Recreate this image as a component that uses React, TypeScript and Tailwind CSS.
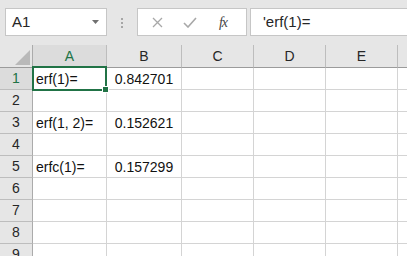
import React from "react";

const font = { fontFamily: '"Liberation Sans", Arial, sans-serif' };

const data: Record<number, [string, string]> = {
  1: ["erf(1)=", "0.842701"],
  3: ["erf(1, 2)=", "0.152621"],
  5: ["erfc(1)=", "0.157299"],
};

const colLetters = ["A", "B", "C", "D", "E", ""];

export default function App() {
  const rows = [1, 2, 3, 4, 5, 6, 7, 8, 9];
  return (
    <div className="w-[407px] h-[256px] overflow-hidden bg-[#e6e6e6] text-[#222]" style={font}>
      {/* Toolbar */}
      <div className="h-[45px] flex items-start pt-[8px]">
        <div className="ml-[5px] w-[102px] h-[28px] bg-white border border-[#c6c6c6] flex items-center pl-[6px] pr-[7px]">
          <span className="text-[15px] text-[#262626] flex-1 pt-[1px]">A1</span>
          <svg width="7" height="4" viewBox="0 0 7 4">
            <polygon points="0,0 7,0 3.5,4" fill="#707070" />
          </svg>
        </div>
        <div className="w-[30px] h-[28px] flex flex-col items-center justify-center gap-[2px] pt-[1px]">
          <div className="w-[2px] h-[2px] bg-[#a6a6a6]" />
          <div className="w-[2px] h-[2px] bg-[#a6a6a6]" />
          <div className="w-[2px] h-[2px] bg-[#a6a6a6]" />
        </div>
        <div className="w-[110px] h-[28px] bg-white border border-[#c6c6c6] flex items-center">
          <div className="w-[38px] flex justify-center pl-[1px]">
            <svg width="11" height="11" viewBox="0 0 11 11">
              <path d="M1 1 L10 10 M10 1 L1 10" stroke="#a8a8a8" strokeWidth="1.3" fill="none" />
            </svg>
          </div>
          <div className="w-[28px] flex justify-center">
            <svg width="14" height="11" viewBox="0 0 14 11">
              <path d="M1 6 L5 10 L13 1" stroke="#a8a8a8" strokeWidth="1.6" fill="none" />
            </svg>
          </div>
          <div className="flex-1 flex justify-center pr-[4px]">
            <span
              className="italic text-[14px] text-[#444] tracking-[-1px]"
              style={{ fontFamily: '"Liberation Serif", "Times New Roman", serif' }}
            >
              fx
            </span>
          </div>
        </div>
        <div className="ml-[3px] flex-1 -mr-[4px] h-[28px] bg-white border border-[#c6c6c6] flex items-center pl-[12px]">
          <span className="text-[15px] text-[#262626] pt-[1px]">'erf(1)=</span>
        </div>
      </div>

      {/* Grid */}
      <div className="grid grid-cols-[33px_74px_75px_72px_72px_72px_1fr] grid-rows-[23px] auto-rows-[22px] bg-white">
        {/* Header row */}
        <div className="relative bg-[#e6e6e6] border-r border-b border-r-[#ababab] border-b-[#9b9b9b]">
          <svg className="absolute left-0 top-0" width="32" height="22" viewBox="0 0 32 22">
            <polygon points="15,20 30,5 30,20" fill="#b9b9b9" />
          </svg>
        </div>
        {colLetters.map((c, i) => (
          <div
            key={"h" + i}
            className={`flex items-center justify-center text-[14px] border-b border-b-[#9b9b9b] ${
              i < 5 ? "border-r border-r-[#bdbdbd]" : ""
            } ${i === 0 ? "bg-[#dcdcdc] text-[#217346]" : "bg-[#e6e6e6] text-[#262626]"}`}
          >
            {c}
          </div>
        ))}

        {rows.map((r) => (
          <React.Fragment key={r}>
            <div
              className={`flex items-center justify-center text-[14px] border-r border-b border-r-[#ababab] border-b-[#bdbdbd] ${
                r === 1 ? "bg-[#dcdcdc] text-[#217346]" : "bg-[#e6e6e6] text-[#262626]"
              }`}
            >
              {r}
            </div>
            {[0, 1, 2, 3, 4, 5].map((ci) => (
              <div
                key={ci}
                className={`relative flex items-center text-[14px] text-[#111] border-b border-b-[#d4d4d4] ${
                  ci < 5 ? "border-r border-r-[#d4d4d4]" : ""
                } ${ci === 0 ? "pl-[3px]" : ci === 1 ? "justify-center" : ""}`}
              >
                {data[r] && ci < 2 ? <span className="pt-[1px]">{data[r][ci]}</span> : null}
                {r === 1 && ci === 0 ? (
                  <div className="absolute left-[-1px] top-[-2px] w-[75px] h-[25px] border-2 border-[#217346] z-10">
                    <div className="absolute left-[68px] top-[18px] w-[7px] h-[7px] bg-[#217346] border border-white" />
                  </div>
                ) : null}
              </div>
            ))}
          </React.Fragment>
        ))}
      </div>
    </div>
  );
}
